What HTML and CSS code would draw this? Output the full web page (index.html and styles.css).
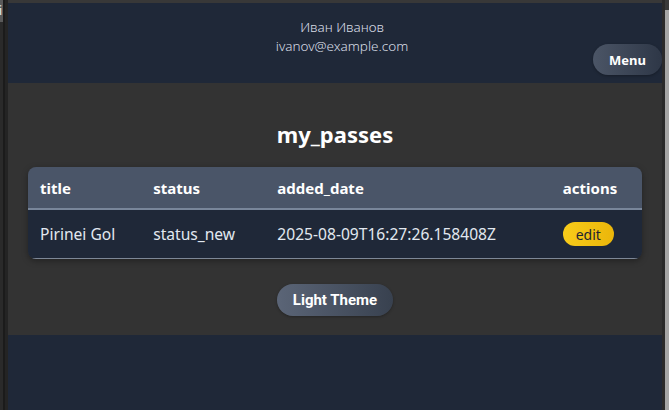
FILE: index.html
```html
<!DOCTYPE html>
<html lang="ru">
<head>
<meta charset="utf-8">
<title>my_passes</title>
<link rel="stylesheet" href="styles.css">
</head>
<body>
<div class="frame">
  <div class="gutter">
    <div class="gutter-tab">i</div>
  </div>
  <div class="app">
    <div class="topline"></div>
    <header class="header">
      <div class="spacer"></div>
      <div class="user">
        <div class="user-name">Иван Иванов</div>
        <div class="user-email">ivanov@example.com</div>
      </div>
      <div class="menu-cell">
        <button class="menu-btn">Menu</button>
      </div>
    </header>
    <main class="main">
      <h2 class="page-title">my_passes</h2>
      <div class="card">
        <table class="passes">
          <colgroup>
            <col class="c-title"><col class="c-status"><col class="c-date"><col class="c-actions">
          </colgroup>
          <thead>
            <tr><th>title</th><th>status</th><th>added_date</th><th>actions</th></tr>
          </thead>
          <tbody>
            <tr>
              <td>Pirinei Gol</td>
              <td>status_new</td>
              <td>2025-08-09T16:27:26.158408Z</td>
              <td><button class="edit-btn">edit</button></td>
            </tr>
          </tbody>
        </table>
      </div>
      <div class="theme-row">
        <button class="theme-btn">Light Theme</button>
      </div>
    </main>
    <footer class="footer"></footer>
  </div>
  <div class="scrollbar">
    <div class="scroll-track"></div>
    <div class="scroll-thumb-wrap">
      <div class="scroll-arrow"></div>
      <div class="scroll-thumb"></div>
    </div>
  </div>
</div>
</body>
</html>
```

FILE: styles.css
```css
html, body {
  margin: 0;
  padding: 0;
  height: 100%;
  overflow: hidden;
  background: #1f2937;
}

.frame {
  display: flex;
  height: 410px;
  font-family: "Noto Sans", "Open Sans", sans-serif;
}

.gutter {
  width: 8px;
  flex: none;
  background: linear-gradient(to right, #2a2a2a 0 3px, #1b1b1b 3px 5px, #242424 5px 8px);
}

.gutter-tab {
  width: 3px;
  height: 22px;
  background: #5a5a5a;
  color: #f0f0f0;
  font-size: 12px;
  line-height: 22px;
  overflow: hidden;
  text-indent: -1px;
}

.app {
  flex: 1;
  display: flex;
  flex-direction: column;
  min-width: 0;
}

.topline {
  height: 3px;
  background: #383838;
}

.header {
  height: 80px;
  background: #1f2838;
  display: grid;
  grid-template-columns: 1fr auto 1fr;
}

.user {
  padding-top: 15px;
  padding-left: 14px;
  text-align: center;
  color: #d8dde6;
  font-size: 13.5px;
  line-height: 18.5px;
  font-weight: 300;
}

.menu-cell {
  display: flex;
  justify-content: flex-end;
  align-items: flex-end;
  padding-bottom: 8px;
}

.menu-btn {
  width: 69px;
  height: 31px;
  border: none;
  border-radius: 16px;
  background: linear-gradient(to right, #4b5566, #2e3747);
  color: #ffffff;
  font-family: "Noto Sans", sans-serif;
  font-weight: 700;
  font-size: 13px;
  padding: 0;
  box-shadow: 0 1px 3px rgba(0,0,0,0.3);
}

.main {
  background: #333333;
  padding: 36px 20px 19px;
}

.page-title {
  margin: 0 0 18px;
  text-align: center;
  color: #ffffff;
  font-size: 22px;
  line-height: 30px;
  font-weight: 700;
}

.card {
  border-radius: 8px;
  overflow: hidden;
  box-shadow: 0 2px 6px rgba(0,0,0,0.35);
}

.passes {
  width: 100%;
  border-collapse: collapse;
  table-layout: fixed;
  font-size: 15px;
}

.c-title { width: 113px; }
.c-status { width: 124px; }
.c-date { width: 285px; }
.c-actions { width: 91px; }

.passes th {
  background: #4a5568;
  color: #ffffff;
  text-align: left;
  font-weight: 700;
  height: 42px;
  padding: 0 12px;
  border-bottom: 2px solid #79869a;
  box-sizing: border-box;
}

.passes td {
  background: #1f2838;
  color: #e2e8f0;
  font-size: 15.6px;
  height: 48px;
  padding: 0 12px;
  border-bottom: 1px solid #7d8796;
  white-space: nowrap;
}

.edit-btn {
  width: 51px;
  height: 24px;
  border: none;
  border-radius: 12px;
  background: linear-gradient(to right, #f8cc1a, #ebb60a);
  color: #1f2430;
  font-family: "Noto Sans", sans-serif;
  font-size: 14px;
  padding: 0;
}

.theme-row {
  display: flex;
  justify-content: center;
  margin-top: 25px;
}

.theme-btn {
  width: 116px;
  height: 32px;
  border: none;
  border-radius: 16px;
  background: linear-gradient(to right, #5b6577, #38414f);
  color: #ffffff;
  font-family: Roboto, "Liberation Sans", sans-serif;
  font-weight: 700;
  font-size: 15px;
  padding: 0;
  box-shadow: 0 1px 3px rgba(0,0,0,0.3);
}

.footer {
  flex: 1;
  background: #1f2838;
}

.scrollbar {
  width: 7px;
  flex: none;
  display: flex;
}

.scroll-track {
  width: 3px;
  background: #2a2a2a;
}

.scroll-thumb-wrap {
  flex: 1;
  display: flex;
  flex-direction: column;
  background: #2a2a2a;
}

.scroll-arrow {
  height: 10px;
  background: #3a3a3a;
}

.scroll-thumb {
  flex: 1;
  background: #a6a6a6;
}
```
